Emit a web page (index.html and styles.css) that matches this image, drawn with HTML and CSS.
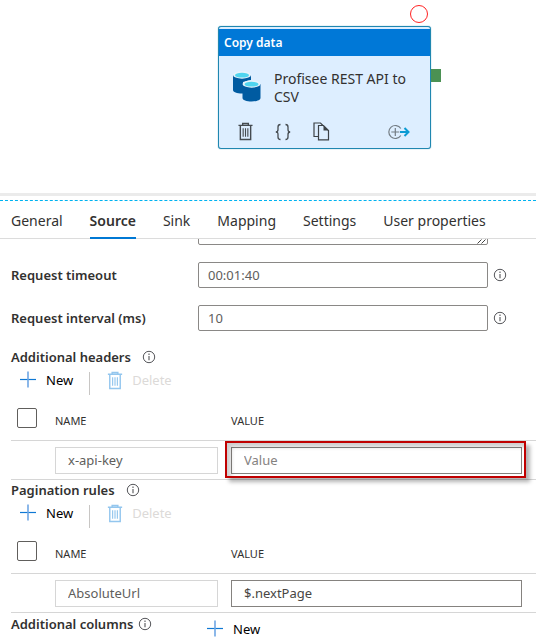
FILE: index.html
```html
<!DOCTYPE html>
<html lang="en">
<head>
<meta charset="utf-8">
<meta name="viewport" content="width=device-width, initial-scale=1">
<title>Copy data</title>
<link rel="stylesheet" href="styles.css">
</head>
<body>
<svg class="defs" aria-hidden="true">
  <symbol id="info" viewBox="0 0 14 14">
    <circle cx="7" cy="7" r="5.7" fill="none" stroke="currentColor"/>
    <path d="M7 3.6v1.3M7 6v4.3" fill="none" stroke="currentColor" stroke-width="1.1"/>
  </symbol>
  <symbol id="plus" viewBox="0 0 18 18">
    <path d="M1 8.5h16" stroke="#0f78d4" fill="none" stroke-width="1.2"/>
    <path d="M9 .5v16" stroke="#6fa6e4" fill="none" stroke-width="1.6"/>
  </symbol>
  <symbol id="trash" viewBox="0 0 16 20">
    <path d="M.5 3.5h15M5 3.2V1.5h6v1.7M2.5 3.5v15h11v-15" fill="none" stroke="currentColor" stroke-width="1.5"/>
    <path d="M5.5 6.5v9M8 6.5v9M10.500 6.5v9" fill="none" stroke="currentColor" stroke-width="1.2"/>
  </symbol>
</svg>

<main class="canvas">
  <article class="node">
    <header class="node-head">Copy data</header>
    <div class="node-title">
      <svg class="db" viewBox="0 0 28 31" aria-hidden="true">
        <path d="M0 4v15c0 2 4 3.500 9 3.500h1V11l8-2V4z" fill="#005ba1"/>
        <ellipse cx="9" cy="4" rx="9" ry="3.700" fill="#e8f4fb"/>
        <ellipse cx="9" cy="4.200" rx="7" ry="2.400" fill="#50d5ef"/>
        <path d="M9.500 13v14c0 2 4 3.500 9 3.500s9-1.500 9-3.500V13z" fill="#005ba1"/>
        <ellipse cx="18.500" cy="13" rx="9" ry="3.700" fill="#e8f4fb"/>
        <ellipse cx="18.500" cy="13.200" rx="7" ry="2.400" fill="#50d5ef"/>
      </svg>
      <span>Profisee REST API to CSV</span>
    </div>
    <div class="node-tools">
      <button type="button" aria-label="Delete activity"><svg width="15" height="19"><use href="#trash"/></svg></button>
      <button type="button" aria-label="View code"><svg width="16" height="18" viewBox="0 0 16 18"><path d="M5.500 1.500C3.500 1.500 3 2.300 3 4v2.500C3 8 2.500 9 .8 9 2.500 9 3 10 3 11.500V14c0 1.700.5 2.500 2.500 2.500M10.500 1.500c2 0 2.500.8 2.500 2.500v2.500C13 8 13.500 9 15.200 9 13.500 9 13 10 13 11.500V14c0 1.700-.5 2.500-2.500 2.500" fill="none" stroke="#454b50" stroke-width="1.300"/></svg></button>
      <button type="button" aria-label="Clone"><svg width="17" height="19" viewBox="0 0 17 19"><path d="M5 14.500H1V1h6.500l3 3" fill="none" stroke="#3c4247" stroke-width="1.200"/><path d="M5.500 3.500h5l5 5v9.300h-10z" fill="#ddeeff" stroke="#3c4247" stroke-width="1.200"/><path d="M10.500 3.500v5h5z" fill="#3c4247"/></svg></button>
      <button type="button" class="add-out" aria-label="Add output"><svg width="22" height="16" viewBox="0 0 22 16"><path d="M12.800 4.500A6.500 6.500 0 1 0 12.800 11.500M7.300 4v8M3.300 8h8" fill="none" stroke="#737c84" stroke-width="1.200"/><path d="M12 8h8M16.500 4l4 4-4 4" fill="none" stroke="#0c9bd3" stroke-width="2"/></svg></button>
    </div>
    <span class="breakpoint"></span>
    <span class="port"></span>
  </article>
</main>

<section class="panel">
  <nav class="tabs">
    <a href="#general">General</a>
    <a href="#source" class="active" aria-current="page">Source</a>
    <a href="#sink">Sink</a>
    <a href="#mapping">Mapping</a>
    <a href="#settings">Settings</a>
    <a href="#user">User properties</a>
  </nav>

  <div class="body">
    <div class="clip">
      <textarea class="box" aria-label="Request body"></textarea>
      <svg class="grip" viewBox="0 0 9 5" aria-hidden="true"><path d="M.5 4.500l4-4M4.500 4.500l4-4" stroke="#444" fill="none"/></svg>
    </div>

    <div class="field">
      <label for="timeout">Request timeout</label>
      <input id="timeout" class="box" type="text" value="00:01:40">
      <svg class="info"><use href="#info"/></svg>
    </div>
    <div class="field">
      <label for="interval">Request interval (ms)</label>
      <input id="interval" class="box" type="text" value="10">
      <svg class="info"><use href="#info"/></svg>
    </div>

    <section class="group">
      <h2>Additional headers <svg class="info wide"><use href="#info"/></svg></h2>
      <div class="toolbar">
        <button type="button"><svg class="plus"><use href="#plus"/></svg>New</button>
        <button type="button" class="delete" disabled><svg class="trash"><use href="#trash"/></svg>Delete</button>
      </div>
      <table>
        <thead>
          <tr><th class="pick"><input type="checkbox" aria-label="Select all headers"></th><th class="name">NAME</th><th>VALUE</th></tr>
        </thead>
        <tbody>
          <tr><td></td><td><input class="key" type="text" value="x-api-key" aria-label="Header name"></td><td><div class="callout"><input class="val" type="text" placeholder="Value" aria-label="Header value"></div></td></tr>
        </tbody>
      </table>
    </section>

    <section class="group">
      <h2>Pagination rules <svg class="info wide"><use href="#info"/></svg></h2>
      <div class="toolbar">
        <button type="button"><svg class="plus"><use href="#plus"/></svg>New</button>
        <button type="button" class="delete" disabled><svg class="trash"><use href="#trash"/></svg>Delete</button>
      </div>
      <table>
        <thead>
          <tr><th class="pick"><input type="checkbox" aria-label="Select all rules"></th><th class="name">NAME</th><th>VALUE</th></tr>
        </thead>
        <tbody>
          <tr><td></td><td><input class="key" type="text" value="AbsoluteUrl" aria-label="Rule name"></td><td><input class="val" type="text" value="$.nextPage" aria-label="Rule value"></td></tr>
        </tbody>
      </table>
    </section>

    <div class="columns">
      <h2>Additional columns <svg class="info"><use href="#info"/></svg></h2>
      <button type="button"><svg class="plus"><use href="#plus"/></svg>New</button>
    </div>
  </div>
</section>
</body>
</html>
```

FILE: styles.css
```css
* { box-sizing: border-box; }

body {
  margin: 0;
  background: #fff;
  color: #323130;
  font: 13px/16px "Noto Sans", "Open Sans", sans-serif;
}

.defs { position: absolute; width: 0; height: 0; }
svg { display: block; flex: none; }
button { border: 0; padding: 0; background: none; font: inherit; color: #000; }

/* Pipeline canvas */
.canvas {
  position: relative;
  height: 193px;
}

.node {
  position: absolute;
  left: 218px;
  top: 26px;
  width: 213px;
  height: 123px;
  border: 1px solid #1f87b0;
  border-radius: 3px;
  background: #ddeeff;
  box-shadow: 0 0 1px #1f87b0;
}

.node-head {
  height: 27px;
  margin-top: 2px;
  padding-left: 5px;
  background: #0078d7;
  color: #fff;
  font-size: 12px;
  font-weight: 600;
  line-height: 28px;
}

.node-title {
  display: flex;
  gap: 13px;
  padding: 14px 12px 0 14px;
  font-size: 14px;
  line-height: 18px;
}

.db { width: 28px; height: 31px; margin-top: 1px; }

.node-tools {
  display: flex;
  align-items: center;
  gap: 22px;
  padding: 16px 20px 0 19px;
  color: #454b50;
}

.node-tools button { color: inherit; }
.node-tools .add-out { margin-left: auto; }

.breakpoint {
  position: absolute;
  right: 2px;
  top: -22px;
  width: 18px;
  height: 18px;
  border: 1px solid #f22;
  border-radius: 50%;
}

.port {
  position: absolute;
  right: -11px;
  top: 42px;
  width: 10px;
  height: 13px;
  background: #4b9153;
}

/* Properties panel */
.panel {
  border-top: 3px solid #ebebeb;
  padding-top: 4px;
}

.tabs {
  display: flex;
  gap: 27px;
  height: 39px;
  padding-left: 11px;
  border-top: 1px dashed #00b2f0;
  border-bottom: 1px solid #dcdcdc;
  font-size: 14px;
  line-height: 40px;
  white-space: nowrap;
}

.tabs a {
  height: 38px;
  color: inherit;
  text-decoration: none;
}

.tabs .active {
  border-bottom: 2px solid #0078d4;
  font-weight: 600;
}

.body { padding-left: 11px; }

.box {
  width: 290px;
  height: 26px;
  padding: 0 9px;
  border: 1px solid #8a8886;
  border-radius: 2px;
  background: #fff;
  color: #605e5c;
  font: inherit;
}

.clip {
  position: relative;
  display: flex;
  align-items: flex-end;
  height: 6px;
  margin-bottom: 17px;
  padding-left: 187px;
  overflow: hidden;
}

.clip .box { flex: none; resize: none; }

.grip {
  position: absolute;
  left: 466px;
  bottom: 1px;
  width: 9px;
  height: 5px;
}

.field {
  display: flex;
  align-items: center;
  margin-bottom: 17px;
}

.field label {
  flex: none;
  width: 187px;
  font-weight: 600;
}

.field .info { margin-left: 5px; }

.info { width: 14px; height: 14px; color: #55565a; }

h2 {
  display: flex;
  align-items: center;
  gap: 5px;
  margin: 0;
  font-size: 13px;
  font-weight: 600;
  line-height: 16px;
}

h2 .wide { margin-left: 6px; }

.field + .group { margin-top: 18px; }
.group { margin-bottom: 2px; }

.toolbar {
  display: flex;
  align-items: center;
  height: 30px;
  padding-left: 8px;
}

.toolbar button, .columns button {
  display: flex;
  align-items: center;
  gap: 9px;
}

.plus { width: 18px; height: 18px; }

.toolbar .delete {
  height: 23px;
  margin: 7px 0 0 16px;
  padding: 0 0 7px 17px;
  border-left: 1px solid #c8c6c4;
  color: #dcdad8;
}

.trash { width: 16px; height: 19px; color: #93c6ee; }

table {
  width: 100%;
  border-collapse: separate;
  border-spacing: 0;
  table-layout: fixed;
}

th {
  height: 46px;
  padding: 6px 0 0;
  border-bottom: 1px solid #d6d6d6;
  font-size: 11px;
  font-weight: 400;
  text-align: left;
}

.pick { width: 44px; padding: 0 0 0 6px; }
.name { width: 176px; }

td {
  height: 39px;
  padding: 0 13px 0 0;
  border-bottom: 1px solid #d6d6d6;
}

td:last-child { padding-right: 14px; }

[type="checkbox"] {
  appearance: none;
  display: block;
  width: 20px;
  height: 20px;
  margin: 0;
  border: 1px solid #605e5c;
  border-radius: 2px;
}

.key, .val {
  display: block;
  width: 100%;
  height: 27px;
  padding: 0 12px;
  border: 1px solid #d6d6d6;
  background: #fff;
  color: #605e5c;
  font: inherit;
}

.val { border-color: #85827f; color: #484644; }
.val::placeholder { color: #85827f; }

.callout { position: relative; }

.callout::after {
  content: "";
  position: absolute;
  inset: -6px -4px -4px -6px;
  border: 2px solid #c00000;
  box-shadow: 4px 4px 4px rgba(0, 0, 0, .3), inset 4px 4px 4px rgba(0, 0, 0, .2);
  pointer-events: none;
}

.columns {
  display: flex;
  align-items: flex-start;
}

.columns h2 { width: 195px; padding-top: 1px; }
.columns button { margin-top: 5px; }
```
